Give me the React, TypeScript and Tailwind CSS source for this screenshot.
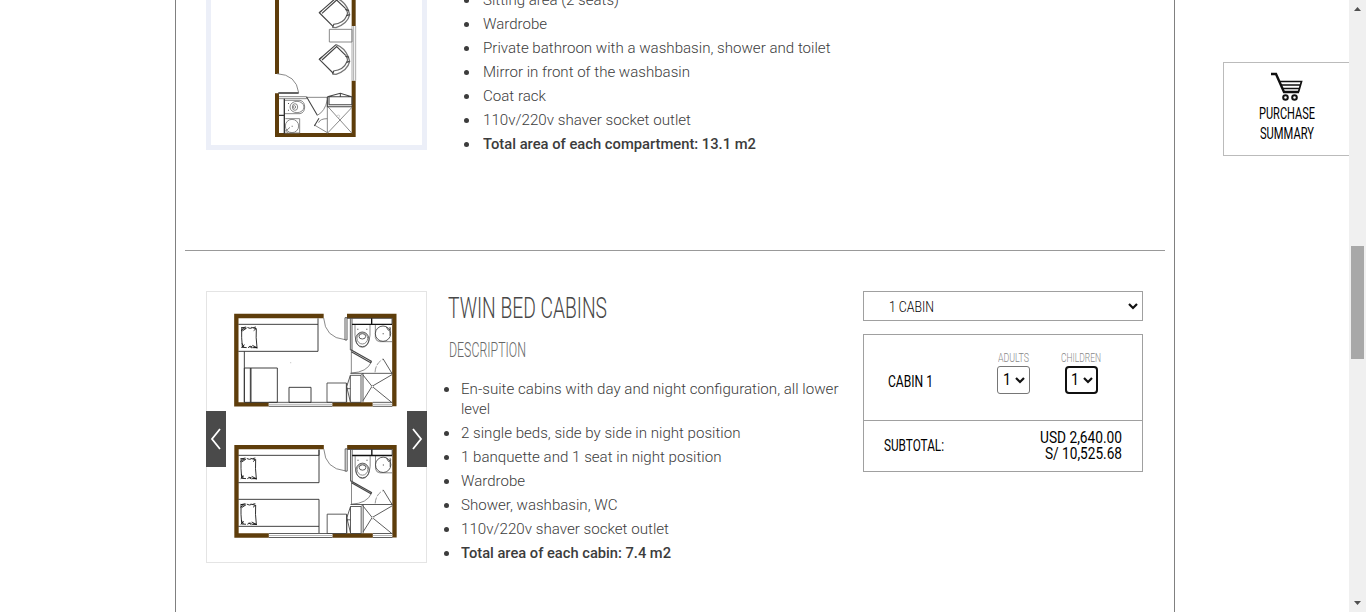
import { useLayoutEffect, useRef, useState } from "react";
import type { ReactNode } from "react";

type FitProps = { width: number; className?: string; children: ReactNode };

/* Condenses a line of text horizontally so that it takes exactly the given width. */
function Fit({ width, className = "", children }: FitProps) {
  const ref = useRef<HTMLSpanElement>(null);
  const [scale, setScale] = useState(1);
  useLayoutEffect(() => {
    if (ref.current) setScale(width / ref.current.getBoundingClientRect().width * scale);
  }, [width]);
  return (
    <span className={"block " + className} style={{ width }}>
      <span
        ref={ref}
        className="inline-block origin-left whitespace-nowrap"
        style={{ transform: `scaleX(${scale})` }}
      >
        {children}
      </span>
    </span>
  );
}

type Item = { text: string; width: number; second?: string; bold?: boolean };

const suiteItems: Item[] = [
  { text: "Sitting area (2 seats)", width: 136 },
  { text: "Wardrobe", width: 64 },
  { text: "Private bathroon with a washbasin, shower and toilet", width: 347.5 },
  { text: "Mirror in front of the washbasin", width: 207 },
  { text: "Coat rack", width: 63 },
  { text: "110v/220v shaver socket outlet", width: 208 },
  { text: "Total area of each compartment: 13.1 m2", width: 273, bold: true },
];

const twinItems: Item[] = [
  { text: "En-suite cabins with day and night configuration, all lower", width: 377.5, second: "level" },
  { text: "2 single beds, side by side in night position", width: 279.5 },
  { text: "1 banquette and 1 seat in night position", width: 260.5 },
  { text: "Wardrobe", width: 64 },
  { text: "Shower, washbasin, WC", width: 156.5 },
  { text: "110v/220v shaver socket outlet", width: 208 },
  { text: "Total area of each cabin: 7.4 m2", width: 210, bold: true },
];

function FeatureList({ items, gap }: { items: Item[]; gap: string }) {
  return (
    <ul className="flex flex-col gap-1 text-[15px] leading-5 text-[#3c3c3c]">
      {items.map((item) => (
        <li key={item.text} className={"flex items-start " + gap}>
          <span className="mt-[8px] size-[5px] shrink-0 rounded-full bg-[#3c3c3c]" />
          <div className={item.bold ? "font-medium" : "font-light"}>
            <Fit width={item.width}>{item.text}</Fit>
            {item.second && <Fit width={29}>{item.second}</Fit>}
          </div>
        </li>
      ))}
    </ul>
  );
}

function Armchair() {
  return (
    <g fill="none" stroke="#444" strokeWidth="3.5">
      <path d="M408 134 358 178 399 219M366 180 410 140 437 166" />
      <path d="M408 134Q434 143 445 171L449 184Q443 211 408 223L397 222" stroke="#777" strokeWidth="4" />
      <path d="M437 166Q446 179 440 187Q431 210 400 213" stroke="#666" />
      <path d="M358 178 366 171M436 168l11 4M439 187l10-3M401 213l-3 9" />
    </g>
  );
}

function SuitePlan() {
  return (
    <svg viewBox="33 0 633 435" className="block h-[145px] w-[211px]">
      <g fill="none" stroke="#5e3d0b" strokeWidth="12">
        <path d="M231 0V222M231 280V405H461V242M461 0V78" />
      </g>
      <path d="M456 78V242M467 78V242M461 78V242" stroke="#999" strokeWidth="2.5" />
      <Armchair />
      <g transform="translate(0 -140)">
        <Armchair />
      </g>
      <g fill="none" stroke="#777" strokeWidth="2.6">
        <path d="M388 88H456V126H388ZM231 221Q289 224 296 278" />
        <path d="M237 290H320V296H237M320 292H382V400M382 318 456 400M456 322 382 400" />
        <path d="M382 300Q375 334 352 346M382 356Q360 356 356 368M343 375 382 398" />
        <path d="M253 301H300Q314 304 314 321Q314 338 300 341H253M256 356H299V399H253" />
        <ellipse cx="291" cy="321" rx="21" ry="17" />
        <ellipse cx="285" cy="321" rx="8" ry="10" />
        <circle cx="283" cy="321" r="4" />
        <circle cx="276" cy="378" r="20" />
        <path d="M254 388 264 398M256 394 270 382" />
      </g>
      <path d="M235 279H296M237 346H253M253 296V401" stroke="#333" strokeWidth="4" fill="none" />
      <path d="M320 291 352 346M343 378l14-23M382 291V320H456M387 291V314H456V290H382l39-10 34 10M421 280v10" stroke="#444" strokeWidth="3.2" fill="none" />
      <circle cx="415" cy="349" r="4" fill="#fff" stroke="#777" />
      <path d="M264 309h3v3h-3zM264 329h3v3h-3zM275 377h3v3h-3z" fill="#555" />
    </svg>
  );
}

function Pillow() {
  return (
    <g fill="none" stroke="#111" strokeWidth="2.6">
      <path d="M126 130Q125 158 128 186M170 130Q168 157 172 188" />
      <path d="M126 129l13-3 12 4 18-4M127 187l18 1 7-4 22 5" strokeDasharray="14 4" />
      <path d="M124 128l16 2-12 8M124 137l10-7M155 127l14 4-7 6M127 175l6 12M135 179l-10 9M158 181l14 7-14 0M149 184l8 5" />
    </g>
  );
}

function BathAndWalls() {
  return (
    <>
      <g fill="none" stroke="#5e3d0b" strokeWidth="13">
        <path d="M207 358H110V93H372M442 93H584V364M398 358H519" />
      </g>
      <g fill="none" stroke="#444" strokeWidth="2.6">
        <path d="M207 352H398M207 364H398M519 352H578M519 364H578" />
        <path d="M207 358H398M519 358H578" stroke="#aaa" />
        <path d="M372 99Q376 158 436 164" stroke="#777" />
        <path d="M436 98h6v67h-6zM452 100V195H457V100M442 100H577V117" />
        <path d="M466 120V151Q469 187 488 187T511 151V120" stroke="#777" />
        <ellipse cx="488" cy="163" rx="20" ry="22" />
        <ellipse cx="488" cy="160" rx="16" ry="17" stroke="#777" />
        <ellipse cx="488" cy="154" rx="10" ry="8" />
        <path d="M527 119V158Q529 169 540 170H577" stroke="#777" />
        <circle cx="550" cy="146" r="23" />
        <path d="M560 126l6 10 8-5M571 126v26" />
        <path d="M455 195V265M455 264Q502 262 515 231" stroke="#777" />
        <path d="M455 195 515 229 513 233 455 200" strokeWidth="3.4" />
        <path d="M526 262Q528 234 550 223" stroke="#888" strokeDasharray="18 4" />
        <path d="M550 221 578 267" />
        <path d="M452 265H578M452 271H484V352H452ZM490 265V352M484 271 490 265" />
        <path d="M382 294H440V352H382M382 294V352M452 271 441 305 452 350M441 311H452M441 294V352" />
        <path d="M490 270 517 304 577 269M517 304 490 347M517 304 576 352" />
      </g>
      <path d="M457 118H577M516 100V118" stroke="#111" strokeWidth="4" />
      <path d="M519 301l4 4-5 4-3-4z" fill="#fff" stroke="#444" />
      <path d="M473 131h3v3h-3zM500 131h3v3h-3zM549 145h3v3h-3z" fill="#333" />
    </>
  );
}

function TwinPlans() {
  return (
    <svg viewBox="22 21 657 810" className="block h-[270px] w-[219px]">
      <BathAndWalls />
      <Pillow />
      <g fill="none" stroke="#333" strokeWidth="2.8">
        <path d="M116 118H355M116 199H355V100M134 199V352" />
        <path d="M134 249H233V352M134 249V352H233M152 249V352M154 249V352M268 307H334V352H268Z" />
      </g>
      <circle cx="273" cy="233" r="2" fill="#ccc" />
      <g transform="translate(0.5 393.5)">
        <BathAndWalls />
      </g>
      <g transform="translate(-2 393)">
        <Pillow />
      </g>
      <g transform="translate(-2 530)">
        <Pillow />
      </g>
      <g fill="none" stroke="#333" strokeWidth="2.8">
        <path d="M116 511H358V494V593H116M116 643H358V744M116 724H358" />
      </g>
    </svg>
  );
}

function SliderArrow({ d }: { d: string }) {
  return (
    <button className="flex h-14 w-5 items-center justify-center bg-[#4a4a4a]">
      <svg viewBox="0 0 20 56" className="h-14 w-5" fill="none" stroke="#fff" strokeWidth="1.8">
        <path d={d} />
      </svg>
    </button>
  );
}

function Chevron() {
  return (
    <svg viewBox="0 0 10 7" className="h-[7px] w-[10px] shrink-0" fill="none" stroke="#111" strokeWidth="2.2">
      <path d="M1 1 5 5 9 1" />
    </svg>
  );
}

function Scrollbar() {
  return (
    <div className="flex w-[17px] shrink-0 flex-col items-center bg-[#f0f0f0]">
      <svg viewBox="0 0 17 17" className="size-[17px]" fill="#505050">
        <path d="M5 11 8.5 7 12 11z" />
      </svg>
      <div className="mt-[229px] h-[113px] w-[13px] bg-[#a8a8a8]" />
      <div className="grow" />
      <svg viewBox="0 0 17 17" className="size-[17px]" fill="#505050">
        <path d="M5 6 8.5 10 12 6z" />
      </svg>
    </div>
  );
}

function BookingPanel() {
  return (
    <div className="w-[280px] text-black">
      <div className="flex h-[30px] items-center justify-between border border-[#a0a0a0] pr-1 pl-[25px] text-[14px] font-light">
        <Fit width={45} className="mt-[2px]">1 CABIN</Fit>
        <Chevron />
      </div>
      <div className="mt-[13px] h-[138px] border border-[#a0a0a0]">
        <div className="flex h-[86px] items-start border-b border-[#a0a0a0] pl-6">
          <div className="w-[109px] pt-[37px] text-[16px] leading-5">
            <Fit width={45}>CABIN 1</Fit>
          </div>
          <div className="flex w-[33px] flex-col items-center pt-[15px] text-[12.5px] leading-4 font-light text-[#888]">
            <Fit width={31}>ADULTS</Fit>
            <div className="flex h-7 w-[33px] items-center justify-between rounded-[3px] border border-[#767676] pr-1 pl-[5px] text-[16px] font-normal text-black">
              <Fit width={8}>1</Fit>
              <Chevron />
            </div>
          </div>
          <div className="ml-[30px] flex w-[41px] flex-col items-center pt-[15px] text-[12.5px] leading-4 font-light text-[#888]">
            <Fit width={40}>CHILDREN</Fit>
            <div className="ml-[2px] flex h-7 w-[33px] items-center justify-between rounded-[4px] border-2 border-[#101010] pr-[3px] pl-1 text-[16px] font-normal text-black">
              <Fit width={8}>1</Fit>
              <Chevron />
            </div>
          </div>
        </div>
        <div className="flex h-[50px] items-center justify-between pr-5 pl-5 text-[16px] leading-4">
          <Fit width={60}>SUBTOTAL:</Fit>
          <div className="flex flex-col items-end pb-px">
            <Fit width={82}>USD 2,640.00</Fit>
            <Fit width={77}>S/ 10,525.68</Fit>
          </div>
        </div>
      </div>
    </div>
  );
}

export default function App() {
  return (
    <div className="flex h-[612px] w-[1366px] overflow-hidden bg-white font-['Roboto','Liberation_Sans',sans-serif]">
      <main className="ml-[175px] h-[612px] w-[1000px] shrink-0 border-x border-[#808080] px-[9px]">
        <section className="flex h-[251px] items-start overflow-hidden border-b border-[#999] pl-[21px]">
          <div className="h-[150px] w-[221px] shrink-0 border-x-[5px] border-b-[5px] border-[#eceff8]">
            <SuitePlan />
          </div>
          <div className="-mt-[10px] ml-[37px]">
            <FeatureList items={suiteItems} gap="gap-[14px]" />
          </div>
        </section>

        <section className="flex items-start pt-10 pl-[21px]">
          <div className="relative h-[272px] w-[221px] shrink-0 border border-[#e4e4e4]">
            <TwinPlans />
            <div className="absolute top-[119px] -right-px -left-px flex justify-between">
              <SliderArrow d="M14 18 6 28 14 38" />
              <SliderArrow d="M6 18 14 28 6 38" />
            </div>
          </div>
          <div className="ml-[17px] w-[419px]">
            <h2 className="ml-[4px] text-[30px] leading-[34px] font-light text-[#484848]">
              <Fit width={159}>TWIN BED CABINS</Fit>
            </h2>
            <h3 className="mt-[14px] mb-[17px] ml-[5px] text-[19.5px] leading-[23px] font-light text-[#666]">
              <Fit width={77}>DESCRIPTION</Fit>
            </h3>
            <FeatureList items={twinItems} gap="gap-3" />
          </div>
          <BookingPanel />
        </section>
      </main>

      <aside className="mt-[62px] ml-12 flex h-[94px] w-[126px] shrink-0 flex-col items-center border-y border-l border-[#bbb] pt-[9px] text-[16px] leading-5 text-black">
        <svg viewBox="0 0 32 30" className="mb-[2px] h-[30px] w-8" fill="none" stroke="#111" strokeWidth="2">
          <path d="M0 2H5L13 20H28" strokeWidth="2.4" />
          <path d="M8 9.5H30.500L27.500 20M10 13H29M11.500 16.500H28" strokeWidth="1.7" />
          <circle cx="14.500" cy="25.500" r="2.300" />
          <circle cx="23.500" cy="25.500" r="2.300" />
        </svg>
        <Fit width={56}>PURCHASE</Fit>
        <Fit width={54}>SUMMARY</Fit>
      </aside>
      <Scrollbar />
    </div>
  );
}
